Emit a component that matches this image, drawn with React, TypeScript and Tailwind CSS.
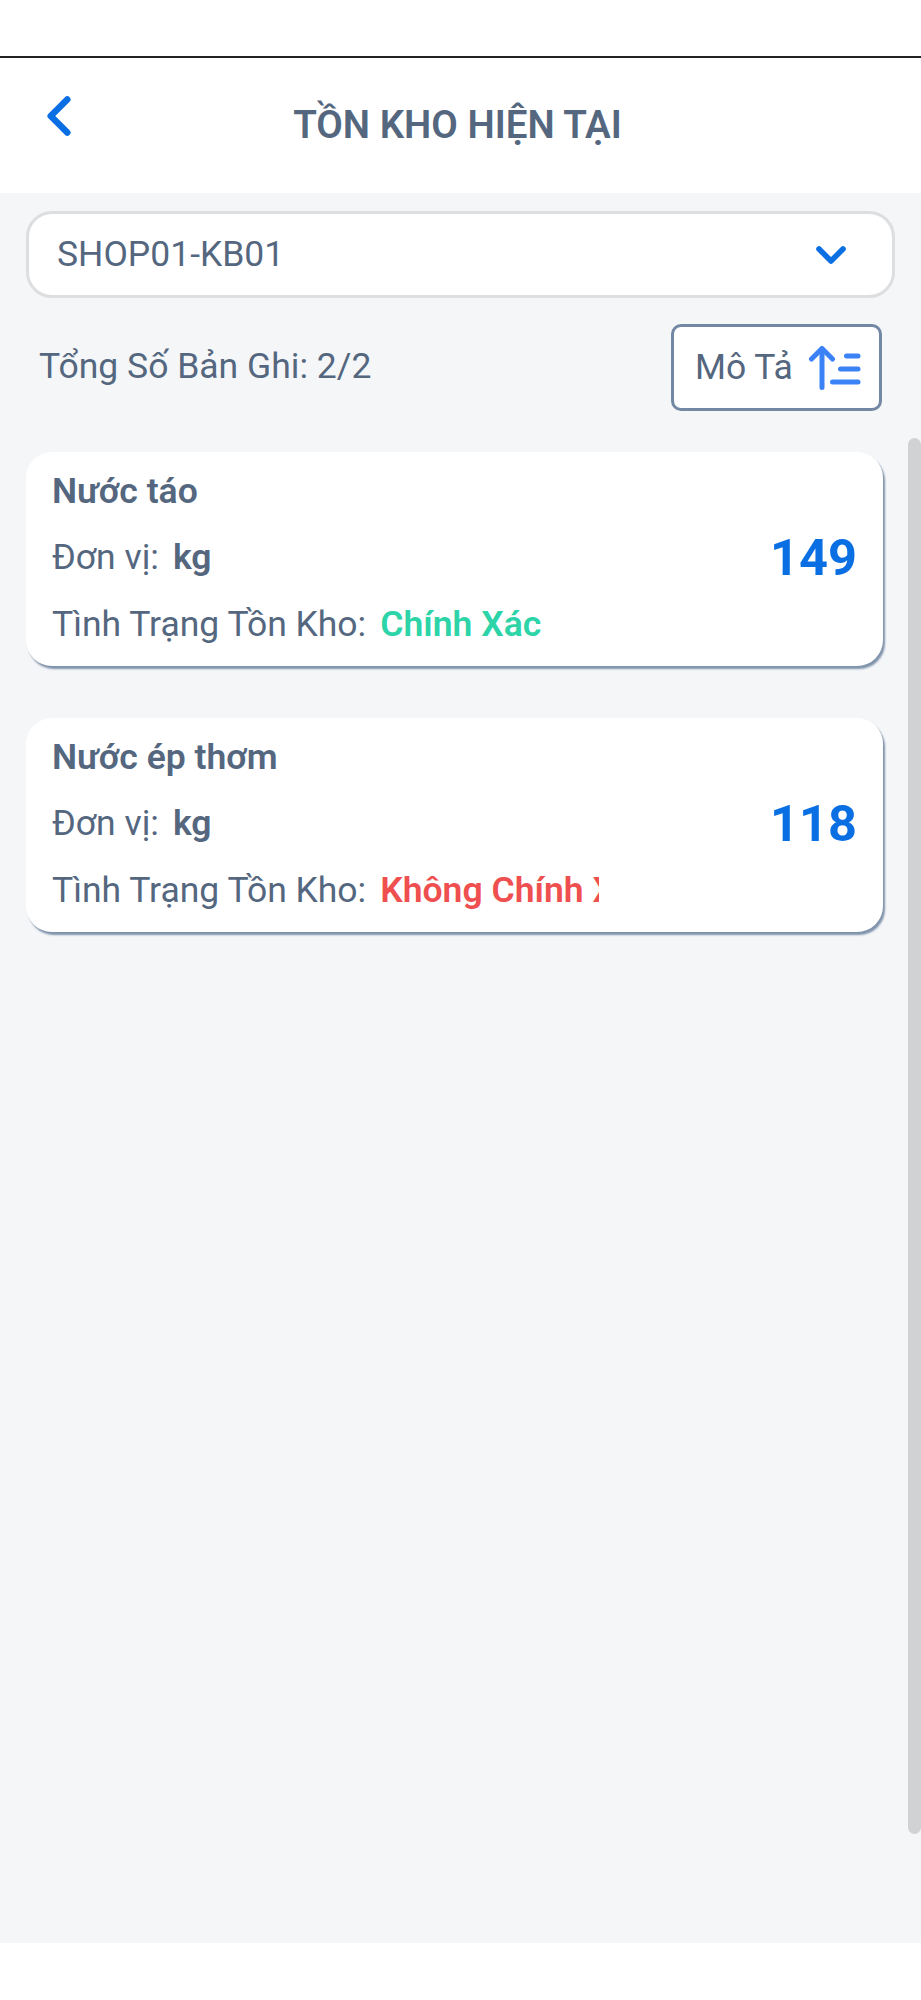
import { ChevronDown, ChevronLeft } from "lucide-react";

const items = [
  { name: "Nước táo", unit: "kg", qty: 149, status: "Chính Xác", statusColor: "text-[#2dd4a8]" },
  { name: "Nước ép thơm", unit: "kg", qty: 118, status: "Không Chính Xác", statusColor: "text-[#ef4f4f]" },
];

function SortIcon() {
  return (
    <svg width="52" height="44" viewBox="0 0 52 44" fill="none" stroke="#3b82f6" strokeWidth="5" strokeLinecap="round">
      <path d="M13 41.5V3" />
      <path d="M2.5 13L13 2.5L23.5 13" strokeLinejoin="round" />
      <path d="M37.5 10H49" />
      <path d="M31.5 23H49" />
      <path d="M23.5 36H49" />
    </svg>
  );
}

function StockCard({ item }: { item: (typeof items)[number] }) {
  return (
    <div className="h-[214px] w-[857px] rounded-[26px] bg-white pl-[26px] pr-[26px] pt-[14px] text-[#54677f] shadow-[2px_3px_2px_0_#7f93ab]">
      <p className="h-[50px] text-[35.5px] font-semibold leading-[50px]">{item.name}</p>
      <div className="flex h-[84px] items-center justify-between">
        <p className="text-[35.5px]">
          Đơn vị:<span className="ml-[14px] font-semibold">{item.unit}</span>
        </p>
        <p className="text-[50.5px] font-bold text-[#0b6fe4]">{item.qty}</p>
      </div>
      <div className="flex h-[50px] items-center text-[35.5px]">
        <span className="shrink-0">Tình Trạng Tồn Kho:</span>
        <span className={`ml-[14px] w-[219px] overflow-hidden whitespace-nowrap font-semibold ${item.statusColor}`}>
          {item.status}
        </span>
      </div>
    </div>
  );
}

export default function App() {
  return (
    <div className="relative flex h-[2000px] w-[921px] flex-col bg-white font-['Roboto',sans-serif] text-[#54677f]">
      <div className="h-[58px] shrink-0 border-b-2 border-[#222]" />
      <header className="relative flex h-[135px] shrink-0 items-center justify-center">
        <ChevronLeft className="absolute left-[26px] top-[25px] h-[66px] w-[66px] text-[#0b6fe4]" strokeWidth={2.4} />
        <h1 className="mb-[2px] mr-[6px] text-[38.5px] font-semibold">TỒN KHO HIỆN TẠI</h1>
      </header>
      <main className="relative h-[1750px] shrink-0 bg-[#f5f6f8] pt-[18px]">
        <div className="ml-[26px] flex h-[87px] w-[869px] items-center justify-between rounded-[26px] border-[3px] border-[#dcdedf] bg-white pl-[28px] pr-[37px]">
          <span className="text-[35.5px]">SHOP01-KB01</span>
          <ChevronDown className="h-[48px] w-[48px] text-[#0b6fe4]" strokeWidth={2.8} />
        </div>
        <div className="ml-[39px] mr-[39px] mt-[26px] flex items-center justify-between">
          <span className="pb-[2px] text-[35.5px]">Tổng Số Bản Ghi: 2/2</span>
          <button className="flex h-[87px] w-[211px] items-center gap-[16px] rounded-[10px] border-[3px] border-[#7388a4] bg-white pl-[21px]">
            <span className="text-[35.5px]">Mô Tả</span>
            <SortIcon />
          </button>
        </div>
        <div className="ml-[26px] mt-[41px] flex flex-col gap-[52px]">
          {items.map((item) => (
            <StockCard key={item.name} item={item} />
          ))}
        </div>
        <div className="absolute right-0 top-[245px] h-[1396px] w-[13px] rounded-full bg-[#d0d2d4]" />
      </main>
      <div className="flex-1 bg-white" />
    </div>
  );
}
